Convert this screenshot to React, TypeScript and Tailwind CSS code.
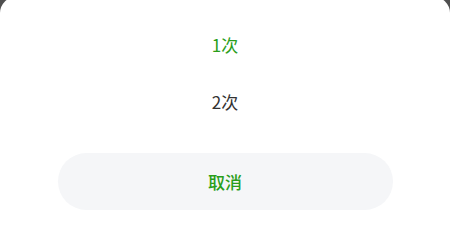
import React from "react";

const options = [
  { label: "1次", active: true },
  { label: "2次", active: false },
];

export default function App() {
  return (
    <div
      className="h-[233px] w-[450px] overflow-hidden bg-[#4f4f4f]"
      style={{ fontFamily: '"Noto Sans CJK SC", "Noto Sans", sans-serif' }}
    >
      <div className="-mt-[3px] flex h-[236px] flex-col rounded-t-[16px] bg-white pt-[19px]">
        {options.map((opt) => (
          <div
            key={opt.label}
            className={`flex h-[57px] items-center justify-center text-[17px] ${
              opt.active ? "text-[#2a9e1a]" : "text-[#333333]"
            }`}
          >
            {opt.label}
          </div>
        ))}
        <div className="mx-auto mt-[23px] flex h-[57px] w-[335px] items-center justify-center rounded-full bg-[#f5f6f8] text-[17px] font-medium text-[#2a9e1a]">
          取消
        </div>
      </div>
    </div>
  );
}
